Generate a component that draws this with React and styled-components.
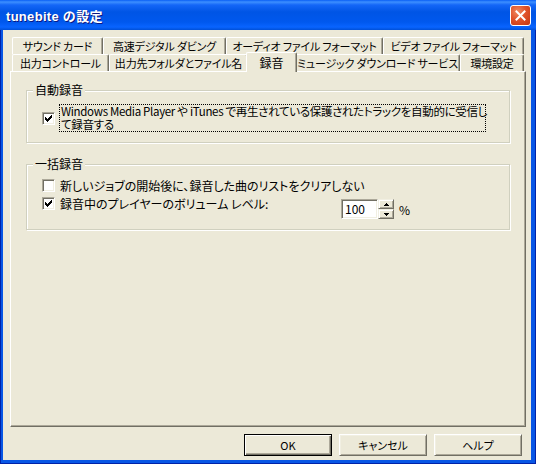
import React from 'react';
import styled, { createGlobalStyle } from 'styled-components';

const GlobalStyle = createGlobalStyle`
  html, body { margin: 0; padding: 0; background: #fff; }
`;

const Window = styled.div`
  width: 536px;
  height: 464px;
  display: flex;
  flex-direction: column;
  background: #0856e5;
  font-family: "Noto Sans CJK JP", sans-serif;
  font-size: 12px;
  font-feature-settings: "palt";
  color: #000;
`;

const TitleBar = styled.div`
  height: 30px;
  flex-shrink: 0;
  display: flex;
  align-items: center;
  padding-left: 6px;
  background: linear-gradient(#0a5ff5 0, #3d8fff 2px, #1466f7 5px, #0055e5 12px, #0058ee 22px, #0864ff 27px, #0050d8 30px);
`;

const Title = styled.div`
  color: #fff;
  font: bold 13px "Liberation Sans", "Noto Sans CJK JP", sans-serif;
  letter-spacing: 0.3px;
  text-shadow: 1px 1px #0a1883;
  margin-top: 1px;
`;

const CloseButton = styled.div`
  width: 21px;
  height: 21px;
  box-sizing: border-box;
  margin-left: auto;
  margin-right: 5px;
  border: 1px solid #fff;
  border-radius: 3px;
  background: radial-gradient(circle at 35% 30%, #f08a62 0, #e0532b 45%, #c4350f 100%);
  display: flex;
  align-items: center;
  justify-content: center;
`;

const Frame = styled.div`
  flex: 1;
  display: flex;
  padding: 0 5px 4px 3px;
  box-shadow: inset 1px 0 #0022a8, inset -1px 0 #0022a8, inset 0 -1px #0022a8;
`;

const Client = styled.div`
  flex: 1;
  display: flex;
  flex-direction: column;
  background: #ece9d8;
  padding: 7px 5px 0 7px;
`;

const TabStrip = styled.div`
  margin-left: 2px;
  width: 512px;
`;

const TabRow = styled.div`
  display: flex;
  align-items: flex-start;
  height: 17px;
`;

const Tab = styled.div`
  width: ${p => p.$w + (p.$active ? 4 : 0)}px;
  height: ${p => (p.$active ? 20 : 17)}px;
  margin: ${p => (p.$active ? '-2px -2px 0' : '0')};
  box-sizing: border-box;
  display: flex;
  align-items: center;
  justify-content: center;
  white-space: nowrap;
  overflow: hidden;
  padding-bottom: ${p => (p.$active ? 1 : 0)}px;
  background: #ece9d8;
  border-top: 1px solid #fff;
  border-left: 1px solid #fff;
  border-right: 1px solid #716f64;
  border-radius: 2px 2px 0 0;
  box-shadow: inset -1px 0 #aca899;
  font-size: ${p => (p.$active ? 12 : 11)}px;
  letter-spacing: ${p => (p.$active ? 0 : -0.2)}px;
  position: ${p => (p.$active ? 'relative' : 'static')};
  z-index: ${p => (p.$active ? 1 : 'auto')};
`;

const Panel = styled.div`
  width: 516px;
  height: 356px;
  box-sizing: border-box;
  border-top: 1px solid #fff;
  border-left: 1px solid #fff;
  border-right: 1px solid #716f64;
  border-bottom: 1px solid #716f64;
  box-shadow: inset -1px -1px #aca899;
  padding: 11px 15px 0;
  display: flex;
  flex-direction: column;
`;

const Group = styled.fieldset`
  margin: ${p => p.$gap}px 0 0;
  padding: 0;
  min-width: 0;
  border: 1px solid #d0d0bf;
  box-shadow: inset 1px 1px #fff, 1px 1px #fff;
`;

const Legend = styled.legend`
  margin-left: 6px;
  padding: 0 2px;
  background: #ece9d8;
  line-height: 14px;
`;

const GroupBody = styled.div`
  display: flex;
  flex-direction: column;
  gap: ${p => p.$gap || 0}px;
  padding: ${p => p.$pad};
`;

const CheckRow = styled.div`
  display: flex;
  align-items: ${p => p.$align || 'center'};
`;

const Box = styled.span`
  width: 13px;
  height: 13px;
  flex-shrink: 0;
  box-sizing: border-box;
  border: 1px solid;
  border-color: #aca899 #fff #fff #aca899;
  box-shadow: inset 1px 1px #716f64, inset -1px -1px #f1efe2;
  background: #fff;
  display: flex;
  align-items: center;
  justify-content: center;
`;

const Label = styled.span`
  margin-left: 4px;
  line-height: 13px;
  white-space: nowrap;
  padding: 0 1px;
  ${p => p.$focus && 'border: 1px dotted #000; width: 423px; font-size: 11.5px; letter-spacing: -0.32px;'}
  ${p => p.$w && `width: ${p.$w}px;`}
`;

const Spin = styled.div`
  display: flex;
  align-items: center;
  margin-top: 2px;
`;

const Edit = styled.div`
  width: 37px;
  height: 20px;
  box-sizing: border-box;
  border: 1px solid;
  border-color: #aca899 #fff #fff #aca899;
  box-shadow: inset 1px 1px #716f64, inset -1px -1px #f1efe2;
  background: #fff;
  padding: 2px 0 0 3px;
  line-height: 14px;
`;

const SpinButtons = styled.div`
  display: flex;
  flex-direction: column;
  height: 20px;
`;

const SpinBtn = styled.div`
  width: 16px;
  height: 10px;
  box-sizing: border-box;
  border: 1px solid;
  border-color: #f1efe2 #716f64 #716f64 #f1efe2;
  box-shadow: inset 1px 1px #fff, inset -1px -1px #aca899;
  background: #ece9d8;
  display: flex;
  align-items: center;
  justify-content: center;
`;

const Percent = styled.span`
  margin-left: 5px;
`;

const ButtonRow = styled.div`
  display: flex;
  justify-content: flex-end;
  gap: 7px;
  margin-top: 7px;
  padding-right: 4px;
  font-size: 11px;
`;

const Button = styled.div`
  width: 88px;
  height: 22px;
  box-sizing: border-box;
  display: flex;
  align-items: center;
  justify-content: center;
  border: 1px solid;
  border-color: ${p => (p.$default ? '#000' : '#fff #716f64 #716f64 #fff')};
  box-shadow: ${p =>
    p.$default
      ? 'inset 1px 1px #fff, inset -1px -1px #716f64, inset -2px -2px #aca899'
      : 'inset 1px 1px #f1efe2, inset -1px -1px #aca899'};
`;

const Check = () => (
  <svg width="7" height="7" viewBox="0 0 7 7" shapeRendering="crispEdges">
    <path d="M0 2h1v1h1v1h1v-1h1v-1h1v-1h1v-1h1v3h-1v1h-1v1h-1v1h-1v1h-1v-1h-1v-1h-1z" fill="#000" />
  </svg>
);

const Arrow = ({ up }) => (
  <svg width="5" height="3" viewBox="0 0 5 3" shapeRendering="crispEdges">
    <path d={up ? 'M2 0h1v1h1v1h1v1h-5v-1h1v-1h1z' : 'M0 0h5v1h-1v1h-1v1h-1v-1h-1v-1h-1z'} fill="#000" />
  </svg>
);

const CheckBox = ({ checked }) => <Box>{checked && <Check />}</Box>;

const backTabs = [
  ['サウンド カード', 91],
  ['高速デジタル ダビング', 123],
  ['オーディオ ファイル フォーマット', 157],
  ['ビデオ ファイル フォーマット', 141],
];

const frontTabs = [
  ['出力コントロール', 97],
  ['出力先フォルダとファイル名', 139],
  ['録音', 47, true],
  ['ミュージック ダウンロード サービス', 165],
  ['環境設定', 64],
];

export default function App() {
  return (
    <>
      <GlobalStyle />
      <Window>
        <TitleBar>
          <Title>tunebite の設定</Title>
          <CloseButton>
            <svg width="11" height="11" viewBox="0 0 11 11">
              <path d="M1.5 1.5l8 8M9.5 1.5l-8 8" stroke="#fff" strokeWidth="2" strokeLinecap="square" />
            </svg>
          </CloseButton>
        </TitleBar>
        <Frame>
          <Client>
            <TabStrip>
              <TabRow>
                {backTabs.map(([t, w]) => (
                  <Tab key={t} $w={w}>{t}</Tab>
                ))}
              </TabRow>
              <TabRow>
                {frontTabs.map(([t, w, a]) => (
                  <Tab key={t} $w={w} $active={a}>{t}</Tab>
                ))}
              </TabRow>
            </TabStrip>
            <Panel>
              <Group $gap={0}>
                <Legend>自動録音</Legend>
                <GroupBody $pad="7px 0 10px 15px">
                  <CheckRow>
                    <CheckBox checked />
                    <Label $focus>
                      Windows Media Player や iTunes で再生されている保護されたトラックを自動的に受信し
                      <br />
                      て録音する
                    </Label>
                  </CheckRow>
                </GroupBody>
              </Group>
              <Group $gap={14}>
                <Legend>一括録音</Legend>
                <GroupBody $pad="8px 0 10px 15px" $gap={5}>
                  <CheckRow>
                    <CheckBox />
                    <Label>新しいジョブの開始後に、録音した曲のリストをクリアしない</Label>
                  </CheckRow>
                  <CheckRow $align="flex-start">
                    <CheckBox checked />
                    <Label $w={280}>録音中のプレイヤーのボリューム レベル:</Label>
                    <Spin>
                      <Edit>100</Edit>
                      <SpinButtons>
                        <SpinBtn><Arrow up /></SpinBtn>
                        <SpinBtn><Arrow /></SpinBtn>
                      </SpinButtons>
                      <Percent>%</Percent>
                    </Spin>
                  </CheckRow>
                </GroupBody>
              </Group>
            </Panel>
            <ButtonRow>
              <Button $default>OK</Button>
              <Button>キャンセル</Button>
              <Button>ヘルプ</Button>
            </ButtonRow>
          </Client>
        </Frame>
      </Window>
    </>
  );
}
